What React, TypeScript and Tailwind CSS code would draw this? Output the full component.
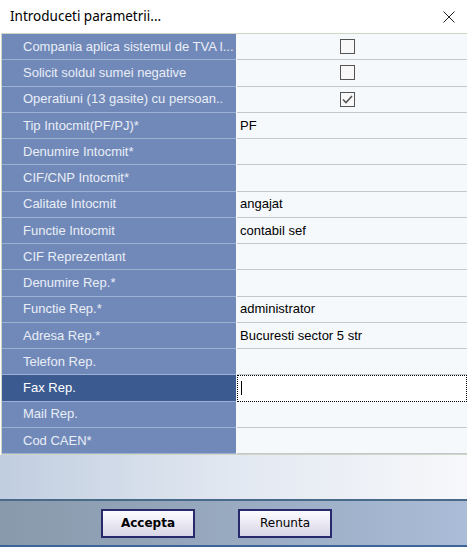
import React from "react";

type Row = {
  label: string;
  value?: string;
  check?: boolean;
  selected?: boolean;
};

const rows: Row[] = [
  { label: "Compania aplica sistemul de TVA l...", check: false },
  { label: "Solicit soldul sumei negative", check: false },
  { label: "Operatiuni (13 gasite) cu persoan..", check: true },
  { label: "Tip Intocmit(PF/PJ)*", value: "PF" },
  { label: "Denumire Intocmit*" },
  { label: "CIF/CNP Intocmit*" },
  { label: "Calitate Intocmit", value: "angajat" },
  { label: "Functie Intocmit", value: "contabil sef" },
  { label: "CIF Reprezentant" },
  { label: "Denumire Rep.*" },
  { label: "Functie Rep.*", value: "administrator" },
  { label: "Adresa Rep.*", value: "Bucuresti sector 5 str" },
  { label: "Telefon Rep." },
  { label: "Fax Rep.", selected: true },
  { label: "Mail Rep." },
  { label: "Cod CAEN*" },
];

const Checkbox = ({ checked }: { checked: boolean }) => (
  <div className="w-[15px] h-[15px] border border-[#555] bg-[#f8f8f8] flex items-center justify-center">
    {checked && (
      <svg width="11" height="9" viewBox="0 0 11 9">
        <path d="M1 4.5 L4 7.5 L10 1" fill="none" stroke="#555" strokeWidth="1.6" />
      </svg>
    )}
  </div>
);

const GridRow = ({ label, value, check, selected }: Row) => (
  <div className="flex-1 flex min-h-0">
    <div
      className={`w-[234px] flex items-center pl-[21px] border-b border-[#9db0d2] text-[#e9eef7] whitespace-nowrap overflow-hidden ${
        selected ? "bg-[#3b5b90] text-white" : "bg-[#7189b9]"
      }`}
    >
      {label}
    </div>
    <div
      className={`flex-1 flex items-center ml-[1px] ${
        selected
          ? "bg-white border border-dotted border-black pl-[3px]"
          : "bg-[#f6f9fc] border-b border-[#c4c8cc] pl-[3px]"
      } ${check !== undefined ? "justify-center pr-[12px]" : ""}`}
    >
      {check !== undefined ? (
        <Checkbox checked={check} />
      ) : selected ? (
        <div className="w-[1px] h-[14px] bg-black" />
      ) : (
        <span className="text-black">{value}</span>
      )}
    </div>
  </div>
);

export default function App() {
  return (
    <div className="w-[467px] h-[547px] bg-white flex flex-col overflow-hidden font-['Liberation_Sans',sans-serif] text-[13px]">
      <div className="h-[33px] flex items-center justify-between pl-[10px] pr-[12px]">
        <span className="text-[13.5px] text-black font-['Noto_Sans',sans-serif]">Introduceti parametrii...</span>
        <svg width="12" height="12" viewBox="0 0 12 12">
          <path d="M0.5 0.5 L11.5 11.5 M11.5 0.5 L0.5 11.5" stroke="#222" strokeWidth="1" />
        </svg>
      </div>
      <div className="ml-[1px] h-[422px] flex flex-col border border-r-0 border-[#cfd6c4] bg-[#f6f9fc]">
        {rows.map((r, i) => (
          <GridRow key={`row-${i}`} {...r} />
        ))}
      </div>
      <div className="h-[44px] bg-gradient-to-r from-[#c1cee0] via-[#e2e8f1] to-[#f7f8fb]" />
      <div className="flex-1 flex items-center gap-[43px] pl-[101px] border-t-2 border-b-2 border-t-[#4a6a8a] border-b-[#3e6597] bg-gradient-to-r from-[#8899ab] to-[#aabcd7] font-['DejaVu_Sans',sans-serif]">
        <button className="w-[94px] h-[29px] border-2 border-[#27296c] bg-gradient-to-b from-[#fcfcff] to-[#d9d5e6] font-bold text-[12px] text-black">
          Accepta
        </button>
        <button className="w-[94px] h-[29px] border-2 border-[#27296c] bg-gradient-to-b from-[#fcfcff] to-[#d9d5e6] text-[12px] text-black">
          Renunta
        </button>
      </div>
    </div>
  );
}
